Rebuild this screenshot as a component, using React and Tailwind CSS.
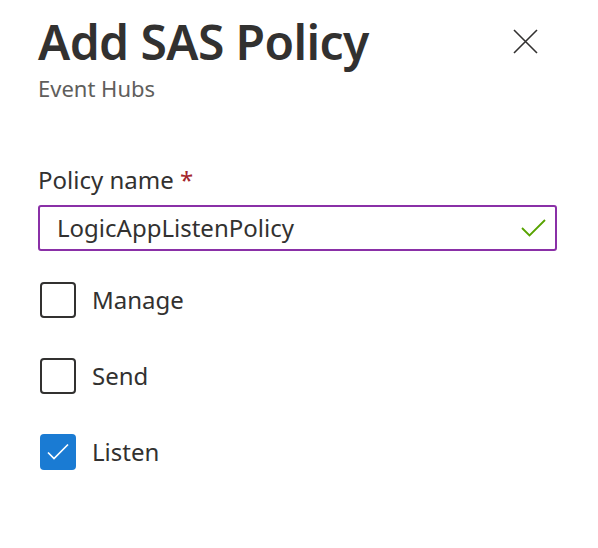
import React from 'react';

const Checkbox = ({ label, checked }) => (
    <label className="flex items-center gap-[16px] h-[36px]">
        {checked ? (
            <span className="w-[36px] h-[36px] rounded-[4px] bg-[#1a7bd3] flex items-center justify-center">
                <svg width="24" height="20" viewBox="0 0 24 20" fill="none">
                    <path d="M2 10.5 L8 16.5 L22 2.5" stroke="white" strokeWidth="1.7" />
                </svg>
            </span>
        ) : (
            <span className="w-[36px] h-[36px] rounded-[4px] border-2 border-[#323130] bg-white" />
        )}
        <span className="text-[24px] text-[#323130]">{label}</span>
    </label>
);

const App = () => {
    return (
        <div className="w-[598px] h-[548px] bg-white font-['Noto_Sans',sans-serif] pl-[38px] pr-[41px]">
            <div className="flex justify-between items-start">
                <div className="pt-[18px]">
                    <h1 className="text-[48px] leading-[48px] font-semibold text-[#323130] tracking-[-0.6px]">Add SAS Policy</h1>
                    <p className="text-[22px] leading-[30px] text-[#605e5c] mt-[7px]">Event Hubs</p>
                </div>
                <button className="mt-[29px] mr-[19px]">
                    <svg width="25" height="25" viewBox="0 0 25 25" fill="none">
                        <path d="M1 1 L24 24 M24 1 L1 24" stroke="#323130" strokeWidth="1.6" />
                    </svg>
                </button>
            </div>

            <div className="mt-[62px]">
                <div className="text-[24px] text-[#323130] leading-[30px]">
                    Policy name <span className="text-[#a4262c]">*</span>
                </div>
                <div className="mt-[10px] w-[519px] h-[46px] border-2 border-[#8a30a7] rounded-[3px] flex items-center justify-between pl-[17px] pr-[9px]">
                    <span className="text-[24px] text-[#323130]">LogicAppListenPolicy</span>
                    <svg width="25" height="18" viewBox="0 0 25 18" fill="none">
                        <path d="M1 9 L8.5 16.5 L24 1" stroke="#57a300" strokeWidth="1.8" />
                    </svg>
                </div>
            </div>

            <div className="mt-[31px] flex flex-col gap-[40px] pl-[2px]">
                <Checkbox label="Manage" />
                <Checkbox label="Send" />
                <Checkbox label="Listen" checked />
            </div>
        </div>
    );
};

export default App;
